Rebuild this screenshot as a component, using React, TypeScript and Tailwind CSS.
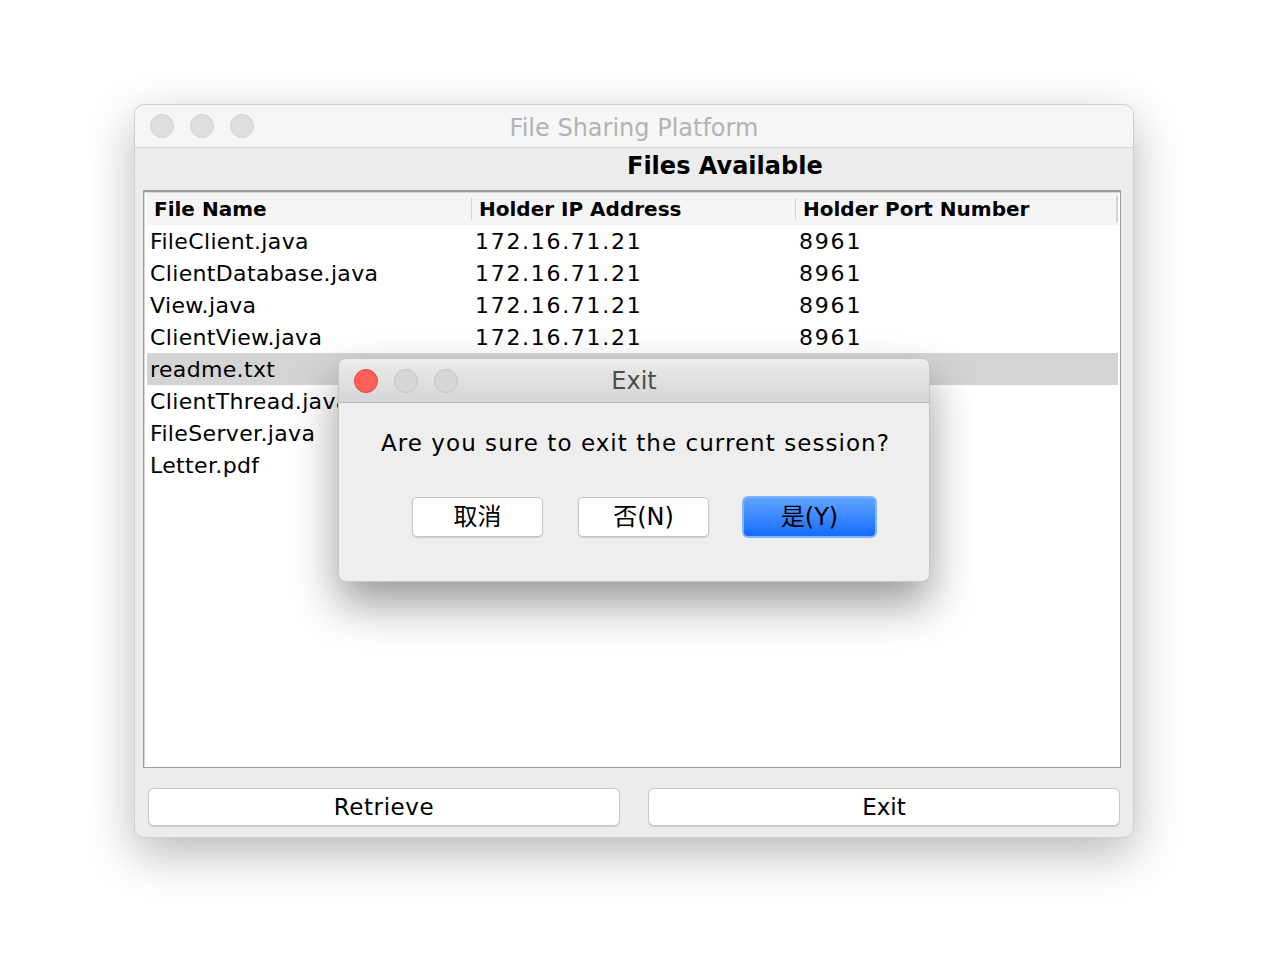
import React from "react";

const rows = [
  ["FileClient.java", "172.16.71.21", "8961"],
  ["ClientDatabase.java", "172.16.71.21", "8961"],
  ["View.java", "172.16.71.21", "8961"],
  ["ClientView.java", "172.16.71.21", "8961"],
  ["readme.txt", "172.16.71.21", "8961"],
  ["ClientThread.java", "172.16.71.21", "8961"],
  ["FileServer.java", "172.16.71.21", "8961"],
  ["Letter.pdf", "172.16.71.21", "8961"],
];

const font = { fontFamily: '"DejaVu Sans", "Noto Sans CJK SC", sans-serif' };

function Light({ color }: { color: "red" | "gray" | "light" }) {
  const cls =
    color === "red"
      ? "bg-[#fe5f57] border-[#e2463f]"
      : color === "gray"
      ? "bg-[#d6d6d6] border-[#c2c2c2]"
      : "bg-[#dedede] border-[#d2d2d2]";
  return <div className={`w-[24px] h-[24px] rounded-full border ${cls}`} />;
}

export default function App() {
  return (
    <div className="w-[1268px] h-[968px] bg-white relative overflow-hidden" style={font}>
      <div className="pt-[104px] pl-[134px]">
        {/* main window */}
        <div className="w-[1000px] h-[734px] rounded-[10px] bg-[#ececec] border border-[#cfcfcf] shadow-[0_16px_48px_rgba(0,0,0,0.28)] flex flex-col overflow-hidden">
          <div className="h-[43px] shrink-0 bg-[#f6f6f6] border-b border-[#d8d8d8] flex items-center relative">
            <div className="flex gap-[16px] pl-[15px]">
              <Light color="light" />
              <Light color="light" />
              <Light color="light" />
            </div>
            <div className="absolute inset-0 pt-[3px] flex items-center justify-center text-[24px] text-[#b3b3b3]">
              File Sharing Platform
            </div>
          </div>
          <div className="h-[42px] shrink-0 flex items-center pl-[492px] pb-[7px] text-[24px] font-bold text-black">
            Files Available
          </div>
          <div className="ml-[8px] w-[978px] h-[578px] border border-[#9c9c9c] border-t-[2px] bg-white flex flex-col">
            <div className="flex-1 border-l border-t border-[#d8d8d8] pl-[2px] pr-[2px] flex flex-col">
              <div className="h-[32px] shrink-0 bg-[#f5f5f5] flex items-center text-[20px] font-bold text-black pb-[1px]">
                <div className="w-[324px] pl-[7px]">File Name</div>
                <div className="w-[1px] h-[22px] bg-[#d4d4d4]" />
                <div className="w-[323px] pl-[7px]">Holder IP Address</div>
                <div className="w-[1px] h-[22px] bg-[#d4d4d4]" />
                <div className="flex-1 pl-[7px]">Holder Port Number</div>
                <div className="w-[2px] h-[26px] bg-[#d4d4d4]" />
              </div>
              {rows.map((r, i) => (
                <div
                  key={i}
                  className={`h-[32px] shrink-0 flex items-center text-[22px] text-black ${
                    i === 4 ? "bg-[#d4d4d4]" : ""
                  }`}
                >
                  <div className="w-[325px] pl-[3px] tracking-[0.35px] whitespace-nowrap">{r[0]}</div>
                  <div className="w-[324px] pl-[3px] tracking-[1.7px]">{r[1]}</div>
                  <div className="flex-1 pl-[3px] tracking-[1.8px]">{r[2]}</div>
                </div>
              ))}
            </div>
          </div>
          <div className="flex gap-[28px] pl-[13px] pt-[20px]">
            <button className="w-[472px] h-[38px] bg-white rounded-[6px] border border-[#c8c8c8] shadow-[0_1px_1px_rgba(0,0,0,0.15)] text-[23px] tracking-[0.6px] text-black flex items-center justify-center">
              Retrieve
            </button>
            <button className="w-[472px] h-[38px] bg-white rounded-[6px] border border-[#c8c8c8] shadow-[0_1px_1px_rgba(0,0,0,0.15)] text-[23px] text-black flex items-center justify-center">
              Exit
            </button>
          </div>
        </div>
      </div>

      {/* dialog */}
      <div className="absolute left-[338px] top-[358px] w-[592px] h-[224px] rounded-[8px] bg-[#eeeeee] border border-[#c6c6c6] shadow-[0_22px_45px_rgba(0,0,0,0.4)] flex flex-col overflow-hidden">
        <div className="h-[44px] shrink-0 bg-gradient-to-b from-[#ececec] to-[#d5d5d5] border-b border-[#b8b8b8] flex items-center relative">
          <div className="flex gap-[16px] pl-[15px]">
            <Light color="red" />
            <Light color="gray" />
            <Light color="gray" />
          </div>
          <div className="absolute inset-0 flex items-center justify-center text-[24px] text-[#4d4d4d]">
            Exit
          </div>
        </div>
        <div className="pl-[42px] pt-[20px] text-[23px] tracking-[1.05px] text-black h-[40px] flex items-center box-content whitespace-nowrap">
          Are you sure to exit the current session?
        </div>
        <div className="flex items-center pl-[73px] pt-[33px]">
          <button className="w-[131px] h-[40px] bg-white rounded-[5px] border border-[#c6c6c6] shadow-[0_1px_1px_rgba(0,0,0,0.15)] text-[24px] text-black flex items-center justify-center">
            取消
          </button>
          <button className="ml-[35px] w-[131px] h-[40px] bg-white rounded-[5px] border border-[#c6c6c6] shadow-[0_1px_1px_rgba(0,0,0,0.15)] text-[24px] text-black flex items-center justify-center">
            否(N)
          </button>
          <button className="ml-[33px] w-[135px] h-[42px] rounded-[6px] border-2 border-[#7fb3fb] bg-gradient-to-b from-[#5ea2ff] to-[#126bff] text-[24px] text-black flex items-center justify-center">
            是(Y)
          </button>
        </div>
      </div>
    </div>
  );
}
